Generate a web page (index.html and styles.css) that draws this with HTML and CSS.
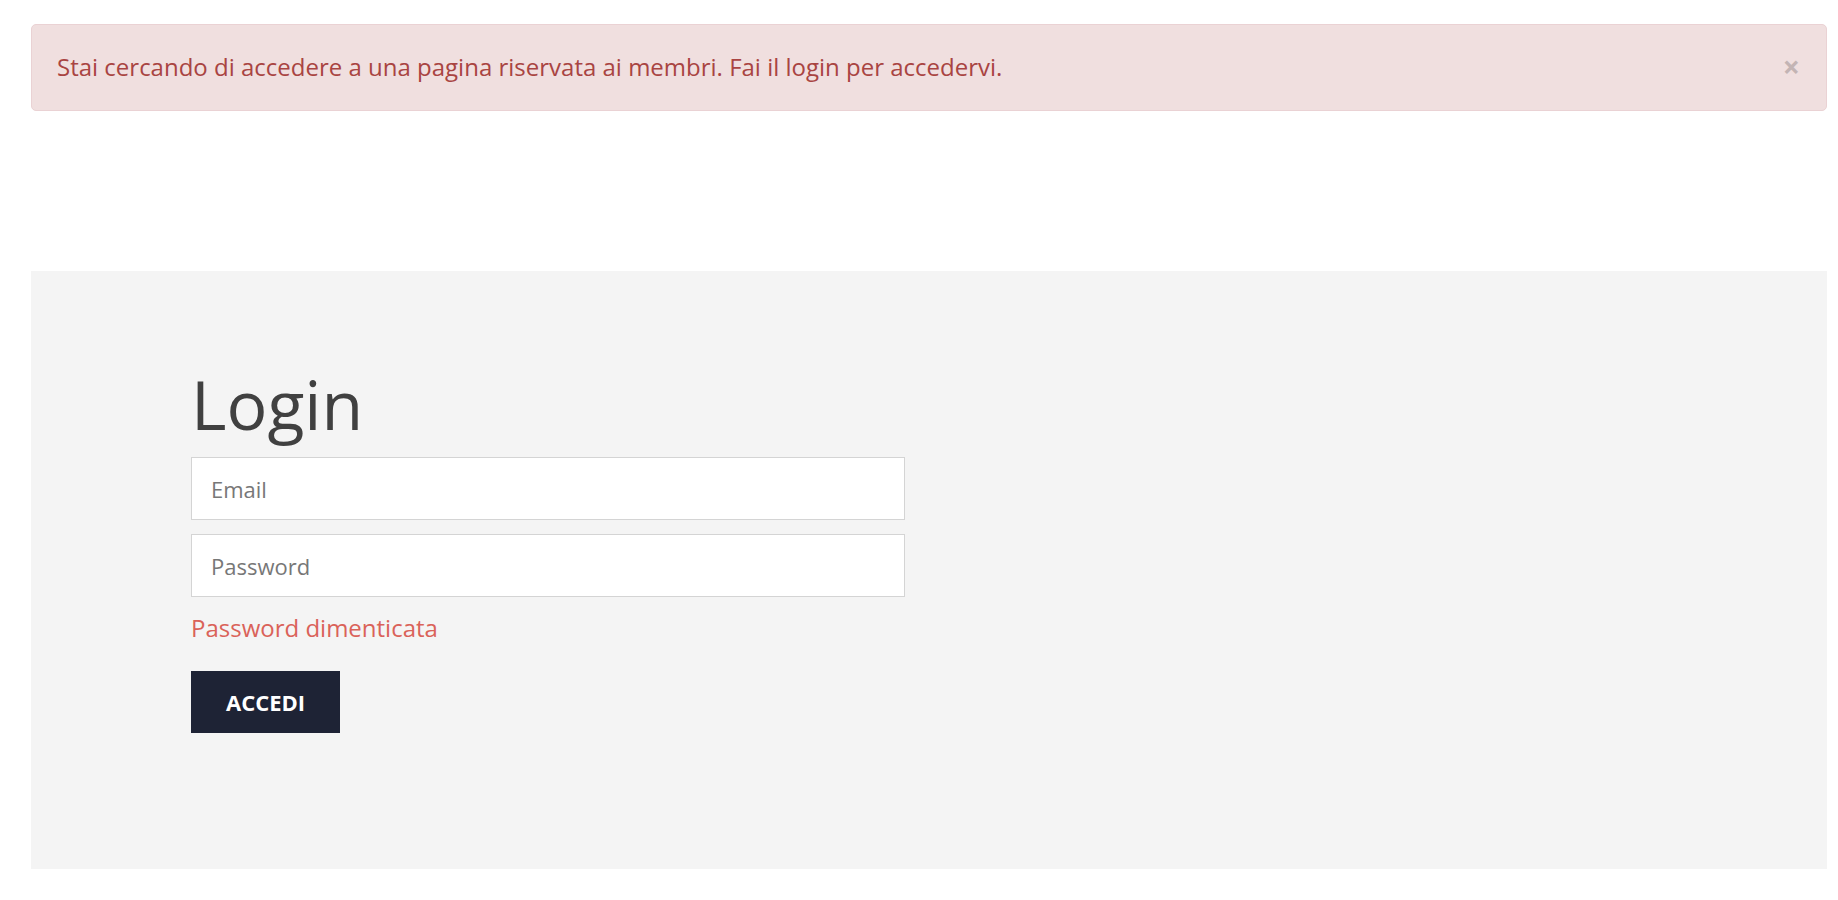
FILE: index.html
```html
<!DOCTYPE html>
<html lang="it">
<head>
  <meta charset="UTF-8">
  <meta name="viewport" content="width=device-width, initial-scale=1.0">
  <title>Login</title>
  <link rel="stylesheet" href="styles.css">
</head>
<body>
  <div class="page">
    <div class="alert">
      <span class="alert-text">Stai cercando di accedere a una pagina riservata ai membri. Fai il login per accedervi.</span>
      <button class="alert-close" type="button" aria-label="Chiudi">&times;</button>
    </div>

    <section class="login-section">
      <h1>Login</h1>
      <form class="login-form">
        <input type="email" class="field" placeholder="Email">
        <input type="password" class="field" placeholder="Password">
        <a href="#" class="forgot">Password dimenticata</a>
        <button type="submit" class="btn-login">ACCEDI</button>
      </form>
    </section>
  </div>
</body>
</html>
```

FILE: styles.css
```css
body {
  margin: 0;
  background: #fff;
  font-family: "Open Sans", "Liberation Sans", sans-serif;
}
.page {
  padding: 24px 11px 31px 31px;
}
.alert {
  display: flex;
  align-items: center;
  justify-content: space-between;
  box-sizing: border-box;
  background: #f0dfdf;
  border: 1px solid #ead2d4;
  border-radius: 5px;
  color: #a94442;
  padding: 0 26px 2px 25px;
  height: 87px;
  font-size: 24px;
}
.alert-close {
  background: none;
  border: none;
  padding: 0;
  font-family: "Open Sans", "Liberation Sans", sans-serif;
  font-size: 30px;
  font-weight: bold;
  line-height: 1;
  color: #c3b4b4;
  cursor: pointer;
}
.login-section {
  margin-top: 160px;
  background: #f4f4f4;
  padding: 94px 160px 136px 160px;
}
.login-section h1 {
  margin: 0 0 15px;
  font-size: 68px;
  font-weight: normal;
  line-height: 77px;
  color: #404040;
}
.login-form {
  display: flex;
  flex-direction: column;
  align-items: flex-start;
}
.field {
  box-sizing: border-box;
  width: 714px;
  height: 63px;
  margin-bottom: 14px;
  padding: 0 19px;
  border: 1px solid #d4d4d4;
  background: #fff;
  font-family: "Open Sans", "Liberation Sans", sans-serif;
  font-size: 22px;
  color: #555;
  outline: none;
}
.field::placeholder {
  color: #777;
}
.field + .field {
  margin-bottom: 13px;
}
.forgot {
  color: #da6259;
  text-decoration: none;
  font-size: 24px;
  line-height: 36px;
  margin-bottom: 25px;
}
.btn-login {
  height: 62px;
  padding: 0 35px;
  border: none;
  background: #1e2335;
  color: #fff;
  font-family: "Open Sans", "Liberation Sans", sans-serif;
  font-size: 22px;
  font-weight: bold;
  cursor: pointer;
}
```
